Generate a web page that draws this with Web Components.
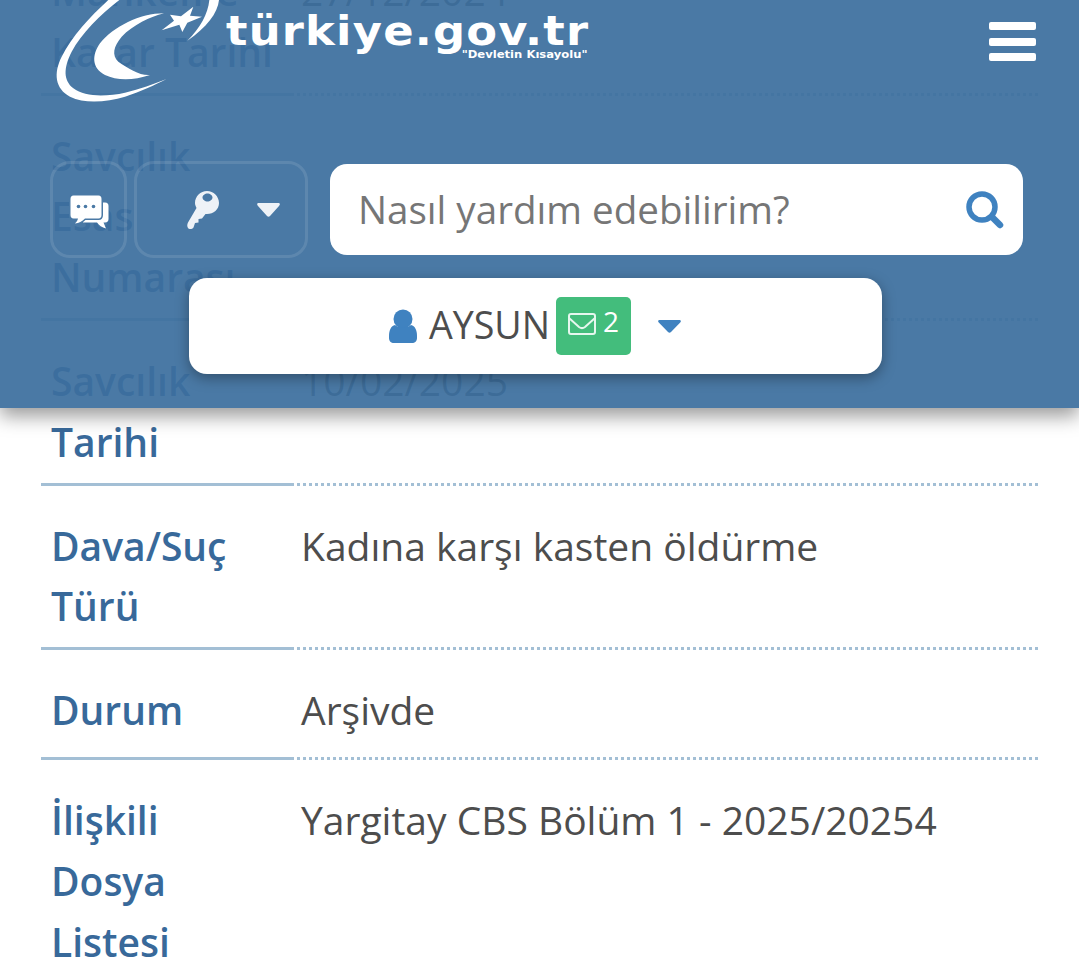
<!DOCTYPE html>
<html lang="tr">
<head>
<meta charset="utf-8">
<title>türkiye.gov.tr</title>
<style>
    html, body {
        margin: 0;
        height: 977px;
        overflow: hidden;
        background: #fff;
        font-family: "Open Sans", sans-serif;
    }
    .table {
        margin: -69px 39px 0 41px;
    }
</style>
</head>
<body>
<gov-header></gov-header>
<div class="table">
    <info-row><span slot="label">Mahkeme Karar&nbsp;Tarihi</span>27/12/2024</info-row>
    <info-row><span slot="label">Savcılık<br>Esas<br>Numarası</span></info-row>
    <info-row><span slot="label">Savcılık Tarihi</span>10/02/2025</info-row>
    <info-row><span slot="label">Dava/Suç Türü</span>Kadına karşı kasten öldürme</info-row>
    <info-row><span slot="label">Durum</span>Arşivde</info-row>
    <info-row><span slot="label">İlişkili<br>Dosya<br>Listesi</span>Yargitay CBS Bölüm 1 - 2025/20254</info-row>
</div>
<script>
class InfoRow extends HTMLElement {
    constructor() {
        super();
        this.attachShadow({ mode: "open" });
        this.shadowRoot.innerHTML = `
            <style>
                :host {
                    display: grid;
                    grid-template-columns: 253px minmax(0, 1fr);
                    min-height: 110px;
                    box-sizing: border-box;
                    font-size: 39px;
                    line-height: 60.8px;
                }
                .label {
                    min-width: 0;
                    padding: 30px 10px 10px 10px;
                    font-weight: 600;
                    color: #38699a;
                    border-bottom: 3px solid #a3bfd5;
                }
                .value {
                    padding: 30px 0 13px 7px;
                    color: #4d4d4d;
                    background: repeating-linear-gradient(to right, transparent 0 3px, #a3bfd5 3px 6px) left bottom / 100% 3px no-repeat;
                }
            </style>
            <div class="label"><slot name="label"></slot></div>
            <div class="value"><slot></slot></div>
        `;
    }
}

class GovLogo extends HTMLElement {
    constructor() {
        super();
        this.attachShadow({ mode: "open" });
        this.shadowRoot.innerHTML = `
            <style>
                :host {
                    display: flex;
                    align-items: flex-start;
                    color: #fff;
                }
                svg {
                    display: block;
                    width: 180px;
                    height: 105px;
                    margin-right: -4px;
                }
                .words {
                    display: flex;
                    flex-direction: column;
                    align-items: flex-end;
                    width: 362px;
                    padding-top: 13px;
                    font-family: "DejaVu Sans", sans-serif;
                    font-weight: bold;
                }
                .name {
                    align-self: flex-start;
                    font-size: 40px;
                    line-height: 37px;
                    letter-spacing: 1.1px;
                    white-space: nowrap;
                    transform: scaleX(1.12);
                    transform-origin: left center;
                }
                .slogan {
                    font-size: 10px;
                    line-height: 10px;
                    white-space: nowrap;
                    transform: scaleX(1.16);
                    transform-origin: right center;
                }
            </style>
            <svg viewBox="0 0 540 315" fill="#fff">
                <path d="M175 0C120 50 65 110 35 170C10 220 15 265 60 290C105 312 170 306 225 290C270 275 315 255 350 237C310 252 270 268 225 278C170 290 105 292 70 265C40 240 40 205 65 155C95 100 150 45 208 0Z"/>
                <path d="M478 0H507C503 40 470 82 412 122C450 85 474 42 478 0Z"/>
                <path d="M342 40C270 40 190 80 150 130C125 165 125 205 165 225C200 242 250 242 300 225C270 228 235 205 205 185C185 165 190 140 215 110C250 75 300 50 342 40Z"/>
                <path d="M430 20L420 47L456 50L412 68L397 96L388 74L335 91L372 62L360 44L393 49Z"/>
            </svg>
            <div class="words">
                <span class="name">türkiye.gov.tr</span>
                <span class="slogan">"Devletin Kısayolu"</span>
            </div>
        `;
    }
}

class IconButton extends HTMLElement {
    constructor() {
        super();
        this.attachShadow({ mode: "open" });
        this.shadowRoot.innerHTML = `
            <style>
                :host {
                    display: flex;
                    align-items: center;
                    justify-content: center;
                    box-sizing: border-box;
                    height: 97px;
                    border: 3px solid rgba(255, 255, 255, 0.11);
                    border-radius: 20px;
                }
            </style>
            <slot></slot>
        `;
    }
}

class SearchBox extends HTMLElement {
    constructor() {
        super();
        this.attachShadow({ mode: "open" });
        this.shadowRoot.innerHTML = `
            <style>
                :host {
                    display: flex;
                    align-items: center;
                    justify-content: space-between;
                    box-sizing: border-box;
                    width: 693px;
                    height: 91px;
                    padding: 0 19px 0 28px;
                    background: #fff;
                    border-radius: 17px;
                    font-size: 38.6px;
                    color: #767676;
                }
                span {
                    padding-bottom: 2px;
                }
                svg {
                    display: block;
                    width: 38px;
                    height: 38px;
                }
            </style>
            <span>Nasıl yardım edebilirim?</span>
            <svg viewBox="0 0 38 38" fill="none" stroke="#3f82c0">
                <circle cx="16" cy="16" r="13" stroke-width="5.5"/>
                <path d="M26 26L34 34" stroke-width="6.5" stroke-linecap="round"/>
            </svg>
        `;
    }
}

class UserCard extends HTMLElement {
    constructor() {
        super();
        this.attachShadow({ mode: "open" });
        this.shadowRoot.innerHTML = `
            <style>
                :host {
                    display: flex;
                    align-items: center;
                    justify-content: center;
                    box-sizing: border-box;
                    width: 693px;
                    height: 96px;
                    padding-right: 1px;
                    background: #fff;
                    border-radius: 18px;
                    box-shadow: 0 4px 14px rgba(0, 0, 0, 0.35);
                    font-size: 37.6px;
                    color: #4d4d4d;
                }
                .user {
                    display: block;
                    width: 28px;
                    height: 34px;
                    margin-right: 12px;
                }
                .name {
                    padding-bottom: 4px;
                }
                .badge {
                    display: flex;
                    align-items: flex-start;
                    gap: 7px;
                    box-sizing: border-box;
                    width: 75px;
                    height: 58px;
                    margin-left: 6px;
                    padding: 4px 0 0 12px;
                    background: #43bd7c;
                    border-radius: 5px;
                    color: #fff;
                    font-size: 28px;
                    line-height: 40px;
                }
                .badge svg {
                    display: block;
                    width: 28px;
                    height: 22px;
                    margin-top: 12px;
                }
                .caret {
                    display: block;
                    width: 23px;
                    height: 13px;
                    margin-left: 27px;
                }
            </style>
            <svg class="user" viewBox="0 0 28 34" fill="#3f82c0">
                <circle cx="14" cy="10" r="9.5"/>
                <path d="M6 16C9 19 19 19 22 16C26 17 28 21 28 27V29C28 32 26 34 23 34H5C2 34 0 32 0 29V27C0 21 2 17 6 16Z"/>
            </svg>
            <span class="name">AYSUN</span>
            <span class="badge">
                <svg viewBox="0 0 28 22" fill="none" stroke="#e6f7ee" stroke-width="2">
                    <rect x="1" y="1" width="26" height="20" rx="2"/>
                    <path d="M1 5L11 14C13 15.5 15 15.5 17 14L27 5"/>
                </svg>
                2
            </span>
            <svg class="caret" viewBox="0 0 23 14" preserveAspectRatio="none" fill="#3f82c0">
                <path d="M2 0H21C23 0 23.5 1.5 22 3L13 13C12 14 11 14 10 13L1 3C-0.5 1.5 0 0 2 0Z"/>
            </svg>
        `;
    }
}

class GovHeader extends HTMLElement {
    constructor() {
        super();
        this.attachShadow({ mode: "open" });
        this.shadowRoot.innerHTML = `
            <style>
                :host {
                    display: block;
                    position: absolute;
                    top: 0;
                    left: 0;
                    right: 0;
                    z-index: 2;
                    box-sizing: border-box;
                    height: 408px;
                    padding: 0 56px 0 50px;
                    background: rgba(60, 111, 158, 0.93);
                    box-shadow: 0 8px 18px rgba(0, 0, 0, 0.4);
                }
                .top {
                    display: flex;
                    justify-content: space-between;
                    height: 105px;
                    margin-right: -13px;
                }
                .menu {
                    display: flex;
                    flex-direction: column;
                    gap: 7.5px;
                    width: 47px;
                    padding-top: 22px;
                }
                .menu i {
                    display: block;
                    height: 8px;
                    background: #fff;
                    border-radius: 2px;
                }
                .tools {
                    display: flex;
                    align-items: center;
                    margin-top: 56px;
                }
                .chat {
                    width: 77px;
                    margin-right: 7px;
                }
                .chat svg {
                    width: 42px;
                    height: 38px;
                    display: block;
                }
                .key {
                    justify-content: flex-start;
                    width: 174px;
                    margin-right: 22px;
                    padding-left: 49px;
                }
                .key svg {
                    display: block;
                }
                .key .caret {
                    margin-left: 37px;
                }
                user-card {
                    margin: 20px 0 0 139px;
                }
            </style>
            <div class="top">
                <gov-logo></gov-logo>
                <div class="menu"><i></i><i></i><i></i></div>
            </div>
            <div class="tools">
                <icon-button class="chat">
                    <svg viewBox="0 0 42 38">
                        <path fill="#fff" d="M34 11.5H37C39.5 11.5 40.5 13 40.5 15V28C40.5 30 39.5 31.5 37 31.5H35.5L38 37.5C34 36.5 31 34.5 29 31.5H15V27H34Z"/>
                        <path fill="#fff" stroke="#4a79a5" stroke-width="3" paint-order="stroke" d="M5.5 4.5H30.5C32.5 4.5 33.5 6 33.5 8V24C33.5 26 32.5 27.5 30.5 27.5H17C14 30.5 11 32 7 32.5C8.5 31 9.5 29.5 10 27.5H5.5C3.5 27.5 2.5 26 2.5 24V8C2.5 6 3.5 4.5 5.5 4.5Z"/>
                        <circle cx="10.5" cy="15.5" r="1.8" fill="#4a79a5"/>
                        <circle cx="17.5" cy="15.5" r="1.8" fill="#4a79a5"/>
                        <circle cx="25.5" cy="15.5" r="1.8" fill="#4a79a5"/>
                    </svg>
                </icon-button>
                <icon-button class="key">
                    <svg width="34" height="40" viewBox="0 0 34 40">
                        <path fill="#eef2f7" fill-rule="evenodd" d="M21 1C27.5 1 33 6.5 33 13C33 19.5 27.5 24 21 24L19.5 24L16 28.5L12.5 29L12.5 32.5L9 33L7.5 37.5C6 39.5 3 39.5 2 38C1 36.5 1 34.5 2 32.5L10.5 18C9.5 16 9 14.5 9 13C9 6.5 14.5 1 21 1ZM21.5 3.5C19 3.5 16.5 5.5 16.5 7.5C16.5 9.5 19 11.5 21.5 11.5C24 11.5 26.5 9.5 26.5 7.5C26.5 5.5 24 3.5 21.5 3.5Z"/>
                    </svg>
                    <svg class="caret" width="23" height="14" viewBox="0 0 23 14" fill="#eef2f7">
                        <path d="M2 0H21C23 0 23.5 1.5 22 3L13 13C12 14 11 14 10 13L1 3C-0.5 1.5 0 0 2 0Z"/>
                    </svg>
                </icon-button>
                <search-box></search-box>
            </div>
            <user-card></user-card>
        `;
    }
}

customElements.define("info-row", InfoRow);
customElements.define("gov-logo", GovLogo);
customElements.define("icon-button", IconButton);
customElements.define("search-box", SearchBox);
customElements.define("user-card", UserCard);
customElements.define("gov-header", GovHeader);
</script>
</body>
</html>
